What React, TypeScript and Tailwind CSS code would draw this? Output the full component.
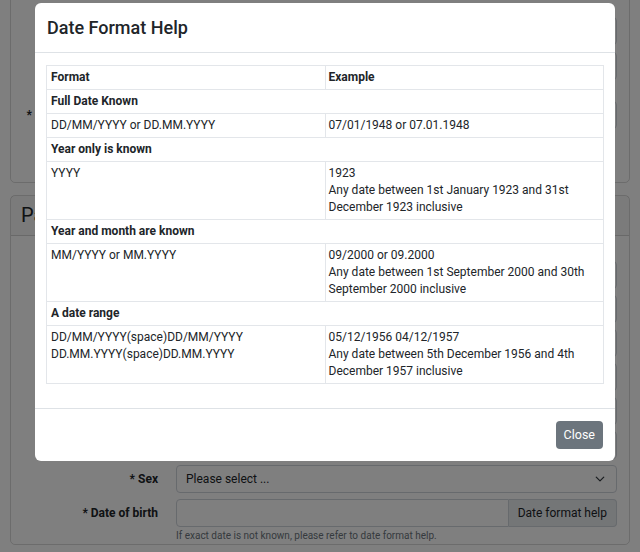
import React from "react";

const FONT = "font-['Roboto','Liberation_Sans',sans-serif]";

const rows: { group: string; format: string[]; example: string[] }[] = [
    {
        group: "Full Date Known",
        format: ["DD/MM/YYYY or DD.MM.YYYY"],
        example: ["07/01/1948 or 07.01.1948"],
    },
    {
        group: "Year only is known",
        format: ["YYYY"],
        example: ["1923", "Any date between 1st January 1923 and 31st", "December 1923 inclusive"],
    },
    {
        group: "Year and month are known",
        format: ["MM/YYYY or MM.YYYY"],
        example: ["09/2000 or 09.2000", "Any date between 1st September 2000 and 30th", "September 2000 inclusive"],
    },
    {
        group: "A date range",
        format: ["DD/MM/YYYY(space)DD/MM/YYYY", "DD.MM.YYYY(space)DD.MM.YYYY"],
        example: ["05/12/1956 04/12/1957", "Any date between 5th December 1956 and 4th", "December 1957 inclusive"],
    },
];

const FormRow = ({ label, children }: { label: string; children?: React.ReactNode }) => (
    <div className="flex items-center gap-[18px]">
        <label className="w-[135px] shrink-0 whitespace-nowrap text-right text-[12px] font-bold text-[#212529]">{label}</label>
        <div className="flex-1">{children ?? <div className="h-[28px] rounded-[4px] border border-[#ced4da]" />}</div>
    </div>
);

export default function App() {
    return (
        <div className={`relative h-[552px] w-[640px] overflow-hidden bg-white ${FONT}`}>
            {/* Page behind the modal */}
            <div className="flex flex-col gap-[12px] px-[10px]">
                <div className="-mt-[10px] flex h-[193px] flex-col rounded-[5px] border border-black/15 px-[12px] pt-[26px]">
                    <FormRow label="* Email" />
                    <div className="mt-[7px]">
                        <FormRow label="* Phone" />
                    </div>
                    <div className="mt-[21px]">
                        <FormRow label="* Contact phone number" />
                    </div>
                </div>

                <div className="rounded-[5px] border border-black/15">
                    <div className="border-b border-black/15 bg-black/[0.03] px-[10px] py-[6px] text-[20px] leading-[27px] text-[#212529]">
                        Patient details
                    </div>
                    <div className="flex flex-col gap-[6px] px-[12px] pt-[25px]">
                        <FormRow label="* Title" />
                        <FormRow label="* First name" />
                        <FormRow label="Other names" />
                        <FormRow label="* Surname" />
                        <FormRow label="Previous surname" />
                        <FormRow label="NHS number" />
                        <FormRow label="* Sex">
                            <div className="flex h-[28px] items-center justify-between rounded-[4px] border border-[#ced4da] pl-[9px] pr-[11px] text-[12px] text-[#212529]">
                                <span>Please select ...</span>
                                <svg width="10" height="10" viewBox="0 0 16 16" fill="none" stroke="#343a40" strokeWidth="2" strokeLinecap="round" strokeLinejoin="round">
                                    <path d="M2 5l6 6 6-6" />
                                </svg>
                            </div>
                        </FormRow>
                        <FormRow label="* Date of birth">
                            <div className="flex h-[28px]">
                                <div className="flex-1 rounded-l-[4px] border border-[#ced4da]" />
                                <div className="flex items-center rounded-r-[4px] border border-l-0 border-[#ced4da] bg-[#e9ecef] px-[9px] text-[12px] text-[#212529]">
                                    Date format help
                                </div>
                            </div>
                        </FormRow>
                        <div className="-mt-[5px] pl-[153px] text-[10px] leading-[16px] text-[#6c757d]">
                            If exact date is not known, please refer to date format help.
                        </div>
                    </div>
                </div>
            </div>

            {/* Backdrop */}
            <div className="absolute inset-0 bg-black/50" />

            {/* Modal */}
            <div className="absolute left-[35px] top-[3px] w-[580px] rounded-[6px] bg-white text-[#212529]">
                <div className="border-b border-[#dee2e6] px-[12px] py-[12px]">
                    <h5 className="text-[18px] font-medium leading-[25px]">Date Format Help</h5>
                </div>

                <div className="px-[11px] pb-[12px] pt-[12px]">
                    <table className="mb-[12px] w-full table-fixed border-collapse border border-[#e3e6ea] text-[12px] leading-[17px]">
                        <thead>
                            <tr>
                                <th className="w-1/2 border border-[#e3e6ea] px-[4px] py-[3px] text-left font-bold">Format</th>
                                <th className="w-1/2 border border-[#e3e6ea] px-[3px] py-[3px] text-left font-bold">Example</th>
                            </tr>
                        </thead>
                        <tbody>
                            {rows.map((r) => (
                                <React.Fragment key={r.group}>
                                    <tr>
                                        <td colSpan={2} className="border border-[#e3e6ea] px-[4px] py-[3px] font-bold">
                                            {r.group}
                                        </td>
                                    </tr>
                                    <tr>
                                        <td className="border border-[#e3e6ea] px-[4px] py-[3px] align-top">
                                            {r.format.map((l) => (
                                                <div key={l}>{l}</div>
                                            ))}
                                        </td>
                                        <td className="border border-[#e3e6ea] px-[3px] py-[3px] align-top">
                                            {r.example.map((l) => (
                                                <div key={l} className="whitespace-nowrap">{l}</div>
                                            ))}
                                        </td>
                                    </tr>
                                </React.Fragment>
                            ))}
                        </tbody>
                    </table>
                </div>

                <div className="flex justify-end border-t border-[#dee2e6] p-[12px]">
                    <button className="h-[28px] rounded-[4px] bg-[#6c757d] px-[8px] text-[12.5px] text-white">Close</button>
                </div>
            </div>
        </div>
    );
}
